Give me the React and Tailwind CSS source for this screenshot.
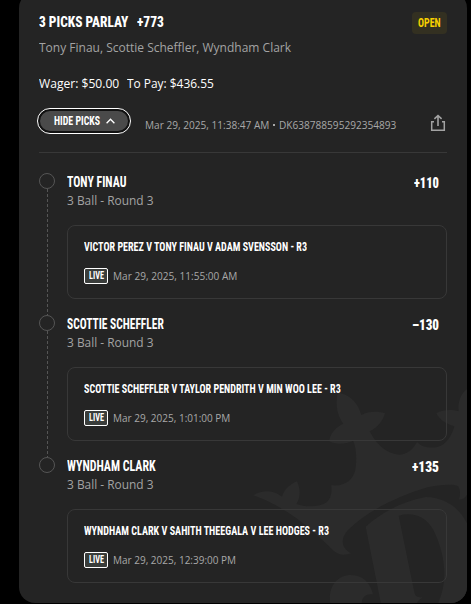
import React, { useLayoutEffect, useRef, useState } from "react";

const picks = [
  {
    name: "TONY FINAU",
    nameWidth: 59,
    odds: "+110",
    oddsWidth: 25,
    market: "3 Ball - Round 3",
    event: "VICTOR PEREZ V TONY FINAU V ADAM SVENSSON - R3",
    eventWidth: 223,
    date: "Mar 29, 2025, 11:55:00 AM",
    dateWidth: 124,
  },
  {
    name: "SCOTTIE SCHEFFLER",
    nameWidth: 97,
    odds: "–130",
    oddsWidth: 27,
    market: "3 Ball - Round 3",
    event: "SCOTTIE SCHEFFLER V TAYLOR PENDRITH V MIN WOO LEE - R3",
    eventWidth: 257,
    date: "Mar 29, 2025, 1:01:00 PM",
    dateWidth: 117,
  },
  {
    name: "WYNDHAM CLARK",
    nameWidth: 89,
    odds: "+135",
    oddsWidth: 27,
    market: "3 Ball - Round 3",
    event: "WYNDHAM CLARK V SAHITH THEEGALA V LEE HODGES - R3",
    eventWidth: 245,
    date: "Mar 29, 2025, 12:39:00 PM",
    dateWidth: 123,
  },
];

// Squeezes a line of text to the given width.
const FitText = ({ width, className, children }) => {
  const ref = useRef(null);
  const [scale, setScale] = useState(1);

  useLayoutEffect(() => {
    setScale(width / ref.current.offsetWidth);
  }, [width]);

  return (
    <span className="block shrink-0" style={{ width }}>
      <span
        ref={ref}
        className={`block w-max origin-left whitespace-nowrap ${className}`}
        style={{ transform: `scaleX(${scale})` }}
      >
        {children}
      </span>
    </span>
  );
};

const Heading = ({ width, className, children }) => (
  <FitText
    width={width}
    className={`font-['Roboto',sans-serif] [font-stretch:75%] ${className}`}
  >
    {children}
  </FitText>
);

const Watermark = () => (
  <svg
    className="absolute -right-1 -bottom-px"
    width="235"
    height="234"
    viewBox="0 0 705 702"
    fill="#2b2b2b"
  >
    <path d="M52 376C80 358 112 361 138 380C144 360 160 343 183 334C195 360 193 385 181 402C210 412 250 412 272 397C288 382 287 362 286 345C320 351 350 334 358 300C363 265 361 238 352 212C330 222 300 226 279 213C283 190 300 170 322 161C302 135 298 98 305 69C340 70 368 102 376 135C397 124 425 123 447 130C440 155 422 175 401 184C420 222 452 252 490 254C515 252 532 237 543 216C560 235 597 238 620 224C640 210 650 188 655 169C630 162 610 148 601 130C620 118 648 118 668 124C665 95 675 70 693 58L705 58V370L693 374C688 383 678 390 669 388C673 375 674 360 666 348C650 341 610 344 575 352C480 380 390 426 336 480C316 502 311 530 345 550C325 558 305 555 290 540C250 500 200 455 150 424C118 403 80 386 52 376Z" />
    <path
      fillRule="evenodd"
      d="M389 470C440 424 505 392 570 381C625 383 668 410 693 460L705 480V702H435ZM488 437C528 425 568 437 591 478C625 545 640 630 605 702H541C545 693 552 687 560 682C545 683 538 680 535 667Z"
    />
    <path d="M283 702C275 655 300 615 345 615C382 615 403 640 411 673C390 670 375 683 378 702Z" />
  </svg>
);

const ShareIcon = () => (
  <svg width="16" height="18" viewBox="0 0 16 18" fill="none" stroke="#a3a3a3">
    <path strokeWidth="1.5" d="M4 7.7H1.7V16.3H14.3V7.7H12" />
    <path strokeWidth="1.6" d="M8 12V1.8M4.4 4.9L8 1.5L11.6 4.9" />
  </svg>
);

const Pick = ({ pick, last }) => (
  <div className="flex h-[142px]">
    <div className="flex w-4 shrink-0 flex-col items-center">
      <div className="size-4 shrink-0 rounded-full border border-[#555]" />
      {!last && (
        <svg className="ml-px" width="1" height="126">
          <path d="M.5 0V126" stroke="#555" strokeDasharray="3 2" />
        </svg>
      )}
    </div>
    <div className="ml-3 grow">
      <div className="flex h-[18px] justify-between pr-2">
        <Heading
          width={pick.nameWidth}
          className="text-[15px] leading-[18px] font-bold text-white"
        >
          {pick.name}
        </Heading>
        <Heading
          width={pick.oddsWidth}
          className="text-[15px] leading-[20px] font-black text-white"
        >
          {pick.odds}
        </Heading>
      </div>
      <FitText width={87} className="text-[13px] leading-[18px] text-[#a3a3a3]">
        {pick.market}
      </FitText>
      <div className="mt-4 h-[74px] rounded-lg border border-[#383838] px-4 pt-3">
        <Heading
          width={pick.eventWidth}
          className="text-[12px] leading-[18px] font-bold text-white"
        >
          {pick.event}
        </Heading>
        <div className="mt-3 flex h-4 items-center gap-[5px]">
          <div className="flex h-4 w-6 items-center justify-center rounded-xs border border-white bg-[#3a3d3b]">
            <Heading
              width={15}
              className="text-[11px] leading-4 font-bold text-white"
            >
              LIVE
            </Heading>
          </div>
          <FitText
            width={pick.dateWidth}
            className="text-[10px] leading-4 text-[#a8a8a8]"
          >
            {pick.date}
          </FitText>
        </div>
      </div>
    </div>
  </div>
);

export default function App() {
  return (
    <div className="h-[604px] w-[471px] overflow-hidden bg-black pl-[19px] font-['Open_Sans',sans-serif]">
      <div className="relative -mt-2 h-[611px] w-[448px] overflow-hidden rounded-2xl bg-[#242424] px-5 pt-5">
        <Watermark />
        <div className="relative">
          <div className="flex h-[22px] justify-between">
            <div className="flex gap-[9px]">
              <Heading
                width={89}
                className="text-[15px] leading-[20px] font-extrabold text-white"
              >
                3 PICKS PARLAY
              </Heading>
              <Heading
                width={27}
                className="text-[15px] leading-[20px] font-extrabold text-white"
              >
                +773
              </Heading>
            </div>
            <div className="flex h-[22px] w-[35px] items-center justify-center rounded bg-[#333021]">
              <Heading
                width={23}
                className="text-[13px] leading-[22px] font-bold text-[#f8d000]"
              >
                OPEN
              </Heading>
            </div>
          </div>

          <div className="mt-[3px]">
            <FitText
              width={252}
              className="text-[13px] leading-5 text-[#a3a3a3]"
            >
              Tony Finau, Scottie Scheffler, Wyndham Clark
            </FitText>
          </div>
          <div className="mt-4 flex gap-2 text-[13px] leading-5 text-white">
            <FitText width={80} className="">
              Wager: $50.00
            </FitText>
            <FitText width={87} className="">
              To Pay: $436.55
            </FitText>
          </div>

          <div className="mt-[15px] -ml-0.5 flex h-[26px] items-center">
            <button className="h-[26px] w-[94px] rounded-full border border-white bg-[#111] p-0.5">
              <span className="flex h-5 items-center justify-center gap-1.5 rounded-full bg-[#4a4a4a]">
                <Heading
                  width={46}
                  className="text-[12px] leading-5 font-bold text-white"
                >
                  HIDE PICKS
                </Heading>
                <svg
                  width="9"
                  height="6"
                  viewBox="0 0 9 6"
                  fill="none"
                  stroke="#fff"
                  strokeWidth="1.3"
                >
                  <path d="M.6 5.2L4.5 1.2L8.4 5.2" />
                </svg>
              </span>
            </button>
            <div className="ml-[14px] flex items-center pt-[7px] text-[10px] leading-4 text-[#a8a8a8]">
              <FitText width={124} className="">
                Mar 29, 2025, 11:38:47 AM
              </FitText>
              <span className="mx-1 size-0.5 bg-[#a8a8a8]" />
              <FitText width={117} className="">
                DK638788595292354893
              </FitText>
            </div>
            <div className="ml-auto pt-1 pr-px">
              <ShareIcon />
            </div>
          </div>

          <div className="mt-[18px] mb-5 h-px bg-[#383838]" />

          {picks.map((pick, index) => (
            <Pick
              key={pick.name}
              pick={pick}
              last={index === picks.length - 1}
            />
          ))}
        </div>
      </div>
    </div>
  );
}
